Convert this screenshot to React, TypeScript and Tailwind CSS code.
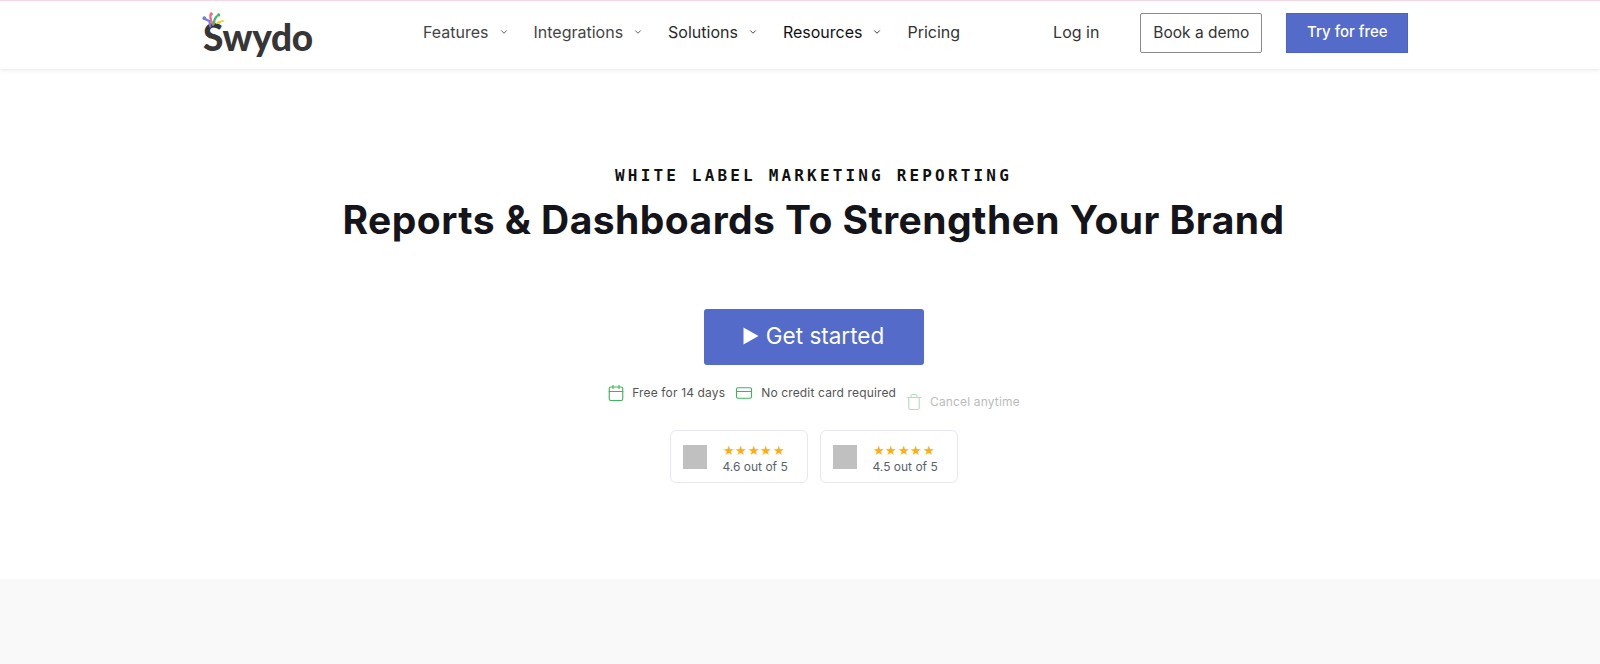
import { ChevronDown, Calendar, CreditCard, Trash } from "lucide-react";

const navItems = [
    { label: "Features", color: "text-[#444444]", caret: true },
    { label: "Integrations", color: "text-[#444444]", caret: true },
    { label: "Solutions", color: "text-[#2a2a2a]", caret: true },
    { label: "Resources", color: "text-[#111111]", caret: true },
    { label: "Pricing", color: "text-[#333333]", caret: false },
];

const perks = [
    { label: "Free for 14 days", Icon: Calendar, iconWidth: 18, extra: "" },
    { label: "No credit card required", Icon: CreditCard, iconWidth: 20, extra: "" },
    { label: "Cancel anytime", Icon: Trash, iconWidth: 18, extra: "mt-[9px] opacity-40" },
];

function Logo() {
    return (
        <div className="relative w-[112px] h-[60px] shrink-0">
            <span className="absolute left-[2px] top-[4px] text-[37px] leading-[60px] font-black tracking-[-0.3px] text-[#363636] font-['Lato','Noto_Sans',sans-serif]">
                Swydo
            </span>
            <svg className="absolute left-[1px] top-[8px]" width="24" height="18" viewBox="0 0 26 18" fill="none">
                <circle cx="2.5" cy="7" r="2" fill="#6c7fe0" />
                <path d="M3 8 L8 10 L9 16" stroke="#6c7fe0" strokeWidth="2.4" strokeLinecap="round" />
                <circle cx="10" cy="2.5" r="1.8" fill="#ef6a8a" />
                <path d="M9 4 Q9 10 12 14" stroke="#ef6a8a" strokeWidth="2.4" strokeLinecap="round" />
                <circle cx="18" cy="3.5" r="1.8" fill="#3dba6a" />
                <path d="M16 5 Q13 8 13 13" stroke="#3dba6a" strokeWidth="2.4" strokeLinecap="round" />
                <path d="M15 13 Q19 9 24 10 Q20 10 19 13" fill="#f5d327" stroke="#f5d327" strokeWidth="1.2" />
            </svg>
        </div>
    );
}

function Rating({ score }: { score: string }) {
    return (
        <div className="flex items-center w-[138px] h-[53px] pl-[12px] gap-[16px] rounded-[6px] border border-[#e8e9ee] bg-white">
            <div className="w-6 h-6 bg-[#c0c0c0]" />
            <div className="flex flex-col items-start pt-[4px]">
                <span className="text-[13px] leading-[15px] tracking-[0.5px] text-[#ffad0d]">★★★★★</span>
                <span className="text-[12px] leading-[17px] text-[#5a5f6e] font-['Inter',sans-serif]">{score}</span>
            </div>
        </div>
    );
}

export default function App() {
    return (
        <div className="min-h-[664px] flex flex-col bg-white font-['Lato','Noto_Sans',sans-serif]">
            {/* Header */}
            <header className="h-[69px] pb-[5px] border-t border-[#f6d9e0] shadow-[0_1px_5px_rgba(0,0,0,0.09)] flex items-center pl-[201px] font-['Inter',sans-serif] text-[16px]">
                <Logo />
                <nav className="flex items-center ml-[110px] gap-[25px] -mt-[2px]">
                    {navItems.map((item) => (
                        <a key={item.label} className={`flex items-center gap-[10px] ${item.color}`}>
                            {item.label}
                            {item.caret && <ChevronDown size={10} strokeWidth={2} />}
                        </a>
                    ))}
                </nav>
                <a className="ml-[93px] -mt-[2px] text-[#333333]">Log in</a>
                <button className="ml-[41px] w-[122px] h-[40px] rounded-[2px] border border-[#8a8a8a] text-[15.5px] text-[#333333]">
                    Book a demo
                </button>
                <button className="ml-[24px] w-[122px] h-[40px] bg-[#546bc9] border border-[#4a63cc] text-[15px] text-white font-medium">
                    Try for free
                </button>
            </header>

            {/* Hero */}
            <main className="h-[510px] pl-[27px] flex flex-col items-center">
                <p className="mt-[96px] text-[16px] leading-[22px] font-bold tracking-[3.17px] text-[#111111] font-['DejaVu_Sans_Mono',monospace]">
                    WHITE LABEL MARKETING REPORTING
                </p>
                <h1 className="mt-[9px] text-[39px] leading-[48px] font-bold tracking-[0.45px] text-[#14141a] font-['Inter',sans-serif]">
                    Reports &amp; Dashboards To Strengthen Your Brand
                </h1>
                <button className="mt-[65px] w-[220px] h-[56px] pb-[3px] rounded-[3px] bg-[#546bc9] text-white text-[22.5px] flex items-center justify-center gap-[7px] font-['Inter',sans-serif]">
                    <svg width="16" height="18" viewBox="0 0 16 18">
                        <path d="M0.5 0.5 L15.5 9 L0.5 17.5 Z" fill="white" />
                    </svg>
                    Get started
                </button>
                <div className="mt-[19px] flex items-start gap-[9px] text-[12px] tracking-[0.15px] text-[#555555] font-['Inter',sans-serif]">
                    {perks.map(({ label, Icon, iconWidth, extra }) => (
                        <div key={label} className={`flex items-center gap-[7px] ${extra}`}>
                            <Icon width={iconWidth} height={18} strokeWidth={1.5} className="text-[#3fb558]" />
                            {label}
                        </div>
                    ))}
                </div>
                <div className="mt-[19px] flex gap-[12px]">
                    <Rating score="4.6 out of 5" />
                    <Rating score="4.5 out of 5" />
                </div>
            </main>

            {/* Next section */}
            <section className="flex-1 bg-[#f9f9f9]" />
        </div>
    );
}
